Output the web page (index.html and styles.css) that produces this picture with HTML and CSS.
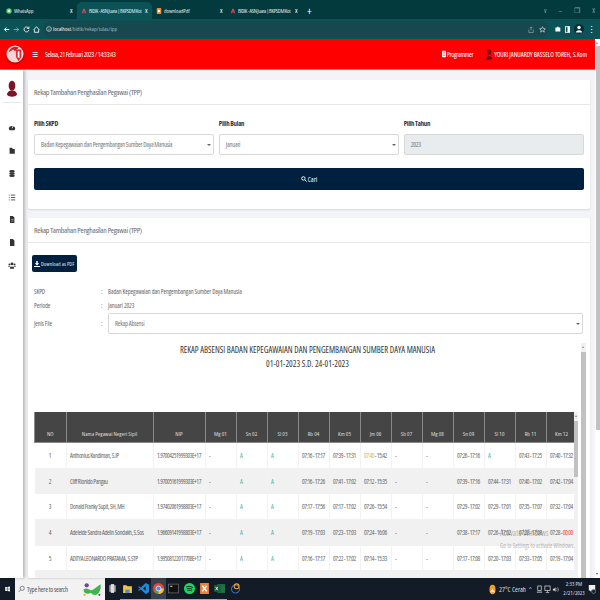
FILE: index.html
```html
<!DOCTYPE html>
<html lang="id">
<head>
    <meta charset="UTF-8">
    <title>BIDIK - ASN Juara</title>
    <link rel="stylesheet" href="styles.css">
</head>
<body>
<!-- browser tabs -->
<div class="tabs">
    <div class="tab tab-wa"><svg class="fav" viewBox="0 0 8 8"><circle cx="4" cy="4" r="3.6" fill="#4fce5d"/><circle cx="4" cy="4" r="1.8" fill="#fff"/></svg><span class="tab-name">WhatsApp</span><span class="tab-x">x</span></div>
    <div class="tab tab-active"><svg class="fav" viewBox="0 0 8 8"><path d="M1 7 3 1h2l2 6H5L4 4 3 7z" fill="#d9414e"/></svg><span class="tab-name">BIDIK - ASN Juara | BKPSDM Kot</span><span class="tab-x">x</span></div>
    <div class="tab tab-pdf"><svg class="fav" viewBox="0 0 8 8"><rect x="1" y="0" width="6" height="8" rx="1" fill="#f08a24"/><rect x="2.500" y="2.500" width="3" height="3" fill="#fff"/></svg><span class="tab-name">downloadPdf</span><span class="tab-x">x</span></div>
    <div class="tab tab-last"><svg class="fav" viewBox="0 0 8 8"><path d="M1 7 3 1h2l2 6H5L4 4 3 7z" fill="#d9414e"/></svg><span class="tab-name">BIDIK - ASN Juara | BKPSDM Kot</span><span class="tab-x">x</span></div>
    <span class="tab-plus">+</span>
    <div class="win-btns"><span>v</span><span>–</span><span>❐</span><span>X</span></div>
</div>

<!-- address bar -->
<div class="toolbar">
    <svg class="tool" viewBox="0 0 10 10"><path d="M9 5H2M5 2 2 5l3 3" fill="none" stroke="#fff" stroke-width="1.300"/></svg>
    <svg class="tool dim" viewBox="0 0 10 10"><path d="M1 5h7M5 2l3 3-3 3" fill="none" stroke="#fff" stroke-width="1.300"/></svg>
    <svg class="tool" viewBox="0 0 10 10"><path d="M8 3a3.500 3.500 0 1 0 .5 2.500M8.500 1v2.500H6" fill="none" stroke="#fff" stroke-width="1.200"/></svg>
    <svg class="tool" viewBox="0 0 10 10"><path d="M2 5v4h6V5M1 5.500 5 1l4 4.500" fill="none" stroke="#fff" stroke-width="1.200"/></svg>
    <div class="address">
        <svg class="addr-info" viewBox="0 0 8 8"><circle cx="4" cy="4" r="3.200" fill="none" stroke="#dfe" stroke-width=".8"/><path d="M4 3.500V6" stroke="#dfe" stroke-width=".8"/></svg>
        <span class="addr-host">localhost</span><span class="addr-path">/bidik/rekap/tulas/tpp</span>
        <svg class="addr-end" viewBox="0 0 8 8"><path d="M1 4v3.500h5V4M3.500 5V1M2 2.500 3.500 1 5 2.500" fill="none" stroke="#8fa9ab" stroke-width=".8"/></svg>
        <svg class="addr-end" viewBox="0 0 8 8"><path d="m4 .8 1 2.200 2.300.2-1.800 1.500.6 2.300L4 5.800 1.900 7l.6-2.300L.7 3.200 3 3z" fill="none" stroke="#cfdcdc" stroke-width=".8"/></svg>
    </div>
    <svg class="tool" viewBox="0 0 10 10"><path d="M2 2h2.500V1h2v1H9v6H2z" fill="#fff"/></svg>
    <svg class="tool" viewBox="0 0 10 10"><rect x="2" y="1" width="6" height="8" fill="none" stroke="#fff" stroke-width="1.200"/><rect x="5" y="1" width="3" height="8" fill="#fff"/></svg>
    <svg class="tool avatar-btn" viewBox="0 0 10 10"><circle cx="5" cy="5" r="5" fill="#052f33"/><circle cx="5" cy="3.500" r="1.700" fill="#fff"/><path d="M2 8.500c0-3 6-3 6 0z" fill="#fff"/></svg>
    <span class="tool-dots">⋮</span>
</div>

<div class="window">
    <div class="app">
        <header class="topbar">
            <svg class="logo" viewBox="0 0 20 20"><circle cx="10" cy="10" r="9.500" fill="#f6d4d4"/><path d="M3 8c2-6 8-7 11-5l-4 4-2-2z" fill="#c8222c"/><path d="M11 5h6v8l-3 5-3-5z" fill="#d92a34"/><path d="M13 7h2v7h-2z" fill="#fff"/></svg>
            <span class="burger">☰</span>
            <span class="date">Selasa, 21 Februari 2023 / 14:33:43</span>
            <div class="role">
                <svg class="role-ico" viewBox="0 0 5 8"><rect width="5" height="8" rx=".5" fill="#fff"/><path d="M1 2h3M1 4h3M1 6h3" stroke="#f00" stroke-width=".6"/></svg>
                <span>Programmer</span>
            </div>
            <div class="user">
                <svg class="user-ico" viewBox="0 0 7 13"><ellipse cx="3.500" cy="3.500" rx="2.500" ry="3.500" fill="#7a0a14"/><path d="M0 12c0-5 7-5 7 0l-3.500 1z" fill="#7a0a14"/></svg>
                <span>YOURI JANUARDY BASSELO TOREH, S.Kom</span>
            </div>
        </header>

        <div class="main">
            <nav class="sidebar">
                <svg class="side-avatar" viewBox="0 0 12 20"><ellipse cx="6" cy="6" rx="4" ry="6" fill="#7d1326"/><path d="M0 17c0-7 12-7 12 0-2 3-10 3-12 0z" fill="#7d1326"/></svg>
                <hr class="side-line">
                <svg class="side-ico" viewBox="0 0 10 10"><path d="M1 7a4 4 0 1 1 8 0L8 8.500H2z" fill="#333"/><path d="M5 6 6.500 3" stroke="#fff"/></svg>
                <svg class="side-ico" viewBox="0 0 10 10"><path d="M2 1.500h3l1 1.500h2.500v6H2z" fill="#333"/></svg>
                <svg class="side-ico" viewBox="0 0 10 10"><ellipse cx="5" cy="2.200" rx="3.500" ry="1.700" fill="#333"/><ellipse cx="5" cy="5" rx="3.500" ry="1.700" fill="#333"/><ellipse cx="5" cy="7.800" rx="3.500" ry="1.700" fill="#333"/></svg>
                <svg class="side-ico side-list" viewBox="0 0 10 10"><path d="M1 2h1M1 5h1M1 8h1M3.500 2H9M3.500 5H9M3.500 8H9" stroke="#333" stroke-width="1"/></svg>
                <svg class="side-ico" viewBox="0 0 10 10"><path d="M2.500 .5h3.500L8 2.500v7H2.500z" fill="#333"/><path d="M4 5h3M4 7h3" stroke="#ddd" stroke-width=".7"/></svg>
                <svg class="side-ico" viewBox="0 0 10 10"><path d="M2.500 .5h3.500L8 2.500v7H2.500z" fill="#333"/></svg>
                <svg class="side-ico" viewBox="0 0 10 10"><circle cx="5" cy="3" r="1.800" fill="#333"/><circle cx="1.800" cy="3.800" r="1.200" fill="#333"/><circle cx="8.200" cy="3.800" r="1.200" fill="#333"/><path d="M2.500 9V6.500h5V9zM.5 7V5.500h1.500V7zM8 5.500h1.500V7H8z" fill="#333"/></svg>
            </nav>

            <main class="content">
                <section class="card card-form">
                    <h2 class="card-title">Rekap Tambahan Penghasilan Pegawai (TPP)</h2>
                    <div class="card-body">
                        <div class="form-grid">
                            <div class="field">
                                <label class="field-label">Pilih SKPD</label>
                                <div class="select">Badan Kepegawaian dan Pengembangan Sumber Daya Manusia<i class="caret"></i></div>
                            </div>
                            <div class="field">
                                <label class="field-label">Pilih Bulan</label>
                                <div class="select">Januari<i class="caret"></i></div>
                            </div>
                            <div class="field">
                                <label class="field-label">Pilih Tahun</label>
                                <div class="select select-off">2023</div>
                            </div>
                        </div>
                        <button class="btn-search">
                            <svg class="btn-ico" viewBox="0 0 8 8"><circle cx="3.200" cy="3.200" r="2.300" fill="none" stroke="#fff" stroke-width="1.200"/><path d="m5 5 2.500 2.500" stroke="#fff" stroke-width="1.300"/></svg>Cari
                        </button>
                    </div>
                </section>

                <section class="card card-report">
                    <h2 class="card-title">Rekap Tambahan Penghasilan Pegawai (TPP)</h2>
                    <div class="card-body">
                        <button class="btn-pdf">
                            <svg class="btn-ico" viewBox="0 0 8 8"><path d="M3 0h2v3h2L4 6 1 3h2zM0 6.500h8V8H0z" fill="#fff"/></svg>Download as PDF
                        </button>
                        <div class="info info-text"><span class="info-key">SKPD</span><span class="info-colon">:</span><span>Badan Kepegawaian dan Pengembangan Sumber Daya Manusia</span></div>
                        <div class="info info-text"><span class="info-key">Periode</span><span class="info-colon">:</span><span>Januari 2023</span></div>
                        <div class="info info-file"><span class="info-key">Jenis File</span><span class="info-colon">:</span><div class="select select-wide">Rekap Absensi<i class="caret"></i></div></div>

                        <div class="report">
                            <div class="report-body">
                                <h3 class="report-title">REKAP ABSENSI BADAN KEPEGAWAIAN DAN PENGEMBANGAN SUMBER DAYA MANUSIA<br>01-01-2023 S.D. 24-01-2023</h3>
                                <div class="table-box">
                                    <div class="table-clip">
                                        <table class="rekap">
                                            <colgroup>
                                                <col class="c-no"><col class="c-nama"><col class="c-nip">
                                                <col class="c-day"><col class="c-day"><col class="c-day"><col class="c-day"><col class="c-day"><col class="c-day">
                                                <col class="c-day"><col class="c-day"><col class="c-day"><col class="c-day"><col class="c-day"><col class="c-day">
                                            </colgroup>
                                            <thead>
                                                <tr><th>NO</th><th>Nama Pegawai Negeri Sipil</th><th>NIP</th><th>Mg 01</th><th>Sn 02</th><th>Sl 03</th><th>Rb 04</th><th>Km 05</th><th>Jm 06</th><th>Sb 07</th><th>Mg 08</th><th>Sn 09</th><th>Sl 10</th><th>Rb 11</th><th>Km 12</th></tr>
                                            </thead>
                                            <tbody>
                                                <tr class="r1"><td class="no">1</td><td class="nama">Anthonius Kandiman, S.IP</td><td>1.97004251999303E+17</td><td>-</td><td class="abs">A</td><td class="abs">A</td><td>07:16 - 17:17</td><td>07:39 - 17:31</td><td><span class="late">07:40</span> - 15:42</td><td>-</td><td>-</td><td>07:26 - 17:16</td><td class="abs">A</td><td>07:43 - 17:25</td><td>07:40 - 17:32</td></tr>
                                                <tr class="r2"><td class="no">2</td><td class="nama">Cliff Rionldo Pangau</td><td>1.97005161999303E+17</td><td>-</td><td class="abs">A</td><td class="abs">A</td><td>07:16 - 17:26</td><td>07:41 - 17:02</td><td>07:12 - 15:35</td><td>-</td><td>-</td><td>07:39 - 17:16</td><td>07:44 - 17:31</td><td>07:40 - 17:02</td><td>07:42 - 17:04</td></tr>
                                                <tr class="r3"><td class="no">3</td><td class="nama">Donald Franky Supit, SH, MH</td><td>1.97402061998803E+17</td><td>-</td><td class="abs">A</td><td class="abs">A</td><td>07:17 - 17:56</td><td>07:17 - 17:02</td><td>07:26 - 15:54</td><td>-</td><td>-</td><td>07:29 - 17:02</td><td>07:29 - 17:01</td><td>07:35 - 17:07</td><td>07:32 - 17:04</td></tr>
                                                <tr class="r4"><td class="no">4</td><td class="nama">Adeleide Sandra Adelin Sondakh, S.Sos</td><td>1.96609141998803E+17</td><td>-</td><td class="abs">A</td><td class="abs">A</td><td>07:19 - 17:03</td><td>07:23 - 17:03</td><td>07:24 - 16:06</td><td>-</td><td>-</td><td>07:38 - 17:17</td><td>07:26 - 17:02</td><td>07:28 - 17:08</td><td>07:28 - <span class="miss">00:00</span></td></tr>
                                                <tr class="r5"><td class="no">5</td><td class="nama">ADITYA LEONARDO PRATAMA, S.STP</td><td>1.99508122017708E+17</td><td>-</td><td class="abs">A</td><td class="abs">A</td><td>07:16 - 17:17</td><td>07:22 - 17:02</td><td>07:14 - 15:33</td><td>-</td><td>-</td><td>07:17 - 17:08</td><td>07:20 - 17:03</td><td>07:33 - 17:05</td><td>07:19 - 17:04</td></tr>
                                                <tr class="r6"><td colspan="15"></td></tr>
                                            </tbody>
                                        </table>
                                    </div>
                                    <div class="bar bar-table"><i class="bar-thumb"></i></div>
                                </div>
                            </div>
                            <div class="bar bar-report"><i class="bar-thumb"></i></div>
                        </div>
                    </div>
                </section>
            </main>
        </div>
    </div>
    <div class="bar bar-page"><i class="bar-thumb"></i></div>

    <div class="activate">
        <div class="activate-big">Activate Windows</div>
        <div>Go to Settings to activate Windows.</div>
    </div>
</div>

<!-- windows taskbar -->
<footer class="taskbar">
    <svg class="start" viewBox="0 0 10 10"><path d="M0 1.500 4.500 1v3.700H0zM5.300.9 10 0v4.700H5.300zM0 5.300h4.500V9L0 8.500zM5.300 5.300H10V10l-4.700-.9z" fill="#fff"/></svg>
    <div class="search">
        <svg class="search-ico" viewBox="0 0 8 8"><circle cx="4.800" cy="3.200" r="2.400" fill="none" stroke="#555" stroke-width=".8"/><path d="M3 5 .8 7.400" stroke="#555" stroke-width=".8"/></svg>
        <span>Type here to search</span>
        <svg class="mask" viewBox="0 0 20 16"><path d="M2 8c3-2 5 0 7 1 3-1 6-4 9-6 1 5-2 11-6 10-2 0-3-2-3-2-3 2-7 1-7-3z" fill="#3fb54a"/><circle cx="5" cy="4" r="2" fill="#7b3fa0"/><circle cx="3" cy="13" r="1" fill="#e6b422"/><circle cx="17" cy="13" r="1" fill="#7b3fa0"/></svg>
    </div>
    <div class="apps">
        <span class="app-item"><svg viewBox="0 0 10 10"><rect x="2" y="2" width="6" height="6" fill="#999"/><rect x="3.500" y="1" width="3" height="8" fill="#ddd"/></svg></span>
        <span class="app-item on"><svg viewBox="0 0 10 10"><path d="M1 2h3l1 1h4v6H1z" fill="#f4c542"/><rect x="3" y="6" width="4" height="3" fill="#4a90d9"/></svg></span>
        <span class="app-item on"><svg viewBox="0 0 10 10"><path d="M7 0 10 1.500v7L7 10 2.500 6 1 7 0 6.300 1.800 5 0 3.700 1 3l1.500 1zM7 3 4.500 5 7 7z" fill="#1f8ad2"/></svg></span>
        <span class="app-item on active"><svg viewBox="0 0 10 10"><circle cx="5" cy="5" r="5" fill="#e0483a"/><path d="M5 5 .7 7.500A5 5 0 0 0 5 10z" fill="#3aa757"/><path d="M5 5h5a5 5 0 0 1-5 5z" fill="#f7c331"/><circle cx="5" cy="5" r="2.200" fill="#4a8af4" stroke="#fff" stroke-width=".6"/></svg></span>
        <span class="app-item on"><svg viewBox="0 0 10 10"><rect x=".5" y="1" width="9" height="8" fill="#111" stroke="#777" stroke-width=".6"/><path d="M2 3h2" stroke="#ccc"/></svg></span>
        <span class="app-item on"><svg viewBox="0 0 10 10"><circle cx="5" cy="5" r="5" fill="#1ed760"/><path d="M2 3.500c2-.6 4-.5 6 .5M2.500 5.200c1.800-.4 3.400-.3 5 .5M3 6.800c1.400-.3 2.700-.2 4 .4" stroke="#111" stroke-width=".8" fill="none"/></svg></span>
        <span class="app-item on"><svg viewBox="0 0 10 10"><rect x="1" y="0" width="8" height="10" fill="#f0803c"/><path d="m3 2.500 4 5M7 2.500l-4 5" stroke="#fff" stroke-width="1.200"/></svg></span>
        <span class="app-item on"><svg viewBox="0 0 10 10"><rect x="3" y="1" width="7" height="8" fill="#1e7145"/><rect x="0" y="2" width="6" height="6" fill="#155c36"/><path d="m1.500 3.500 2 3M3.500 3.500l-2 3" stroke="#fff" stroke-width=".7"/></svg></span>
        <span class="app-item"><svg viewBox="0 0 10 10"><circle cx="5" cy="5.500" r="3.600" fill="none" stroke="#3f6fc4" stroke-width="1"/><circle cx="6" cy="3" r="2.200" fill="none" stroke="#e8a33d" stroke-width="1"/></svg></span>
    </div>
    <div class="tray">
        <svg class="weather" viewBox="0 0 8 12"><ellipse cx="4" cy="6" rx="3.500" ry="5.500" fill="#f29a2e"/><path d="M1.500 9c0-2 1.500-2 2.500-3.500C5 7 6.500 7 6.500 9z" fill="#cfe3f5"/></svg>
        <span class="weather-text">27°C Cerah</span>
        <span class="tray-sym">^</span>
        <svg class="tray-ico" viewBox="0 0 8 10"><rect x="2" y="1" width="4" height="5" fill="none" stroke="#ddd" stroke-width=".8"/><path d="M1 8h6" stroke="#ddd"/></svg>
        <svg class="tray-ico" viewBox="0 0 8 10"><rect x="1" y="1" width="6" height="5" fill="none" stroke="#ddd" stroke-width=".8"/><path d="M4 6v2M2 8.500h4" stroke="#ddd" stroke-width=".8"/></svg>
        <svg class="tray-ico" viewBox="0 0 8 10"><path d="M1 4h1.500L4 2.500v5L2.500 6H1z" fill="#ddd"/><path d="M5 3.500c1 1 1 2 0 3M6.300 2.500c1.400 1.600 1.400 3.400 0 5" fill="none" stroke="#ddd" stroke-width=".6"/></svg>
        <div class="clock"><span>2:33 PM</span><span>2/21/2023</span></div>
        <svg class="notif" viewBox="0 0 10 12"><path d="M1 1h8v7H4L2.500 9.500V8H1z" fill="#eee"/><circle cx="7" cy="9" r="2.600" fill="#1b2430" stroke="#ccc" stroke-width=".5"/></svg>
    </div>
</footer>
</body>
</html>
```

FILE: styles.css
```css
* {
    box-sizing: border-box;
}

html, body {
    margin: 0;
    height: 100%;
}

body {
    width: 600px;
    height: 600px;
    overflow: hidden;
    display: flex;
    flex-direction: column;
    font-family: "Open Sans", "Liberation Sans", sans-serif;
    font-stretch: 75%;
    color: #666;
}

/* browser tabs */
.tabs {
    height: 19px;
    flex: none;
    display: flex;
    align-items: flex-end;
    padding-left: 5px;
    background: #033a3e;
    color: #dfe8e8;
    font-size: 5.800px;
}

.tab {
    height: 17px;
    display: flex;
    align-items: center;
    gap: 2px;
    white-space: nowrap;
}

.tab-wa {
    width: 72px;
    padding-left: 1px;
}

.tab-active {
    width: 75px;
    padding-left: 4px;
    background: #0c5358;
    border-radius: 5px 5px 0 0;
}

.tab-pdf {
    width: 75px;
    padding-left: 4px;
}

.tab-last {
    width: 75px;
    padding-left: 3px;
}

.fav {
    width: 6px;
    height: 8px;
    flex: none;
}

.tab-name {
    min-width: 0;
    flex: 1;
    letter-spacing: -.1px;
}

.tab-active .tab-name,
.tab-last .tab-name {
    letter-spacing: -.38px;
}

.tab-x {
    width: 7px;
    flex: none;
    font-size: 7px;
    color: #fff;
}

.tab-plus {
    height: 17px;
    margin-left: 5px;
    color: #fff;
    font-size: 11px;
    line-height: 17px;
}

.win-btns {
    margin-left: auto;
    height: 17px;
    width: 56px;
    display: flex;
    justify-content: space-between;
    align-items: center;
    padding-right: 5px;
    color: #8aa;
    font-size: 7px;
}

/* address bar */
.toolbar {
    height: 20px;
    flex: none;
    display: flex;
    align-items: center;
    gap: 3px;
    padding: 0 4px 0 3px;
    background: #0c5358;
}

.tool {
    width: 7px;
    height: 7px;
    flex: none;
    overflow: visible;
}

.dim {
    opacity: .5;
}

.address {
    flex: 1;
    height: 16px;
    display: flex;
    align-items: center;
    margin-right: 3px;
    padding: 0 2px 0 3px;
    border-radius: 8px;
    background: #15484f;
    font-size: 5.800px;
    color: #9fb8ba;
}

.addr-info {
    width: 6px;
    height: 6px;
    margin-right: 1px;
}

.addr-host {
    color: #eef4f4;
}

.addr-end {
    width: 7px;
    height: 7px;
    margin-left: 4px;
}

.addr-path + .addr-end {
    margin-left: auto;
}

.avatar-btn {
    width: 10px;
    height: 10px;
}

.tool-dots {
    color: #fff;
    font-size: 9px;
    line-height: 9px;
}

/* page */
.window {
    position: relative;
    flex: 1;
    min-height: 0;
    display: flex;
}

.app {
    flex: 1;
    min-width: 0;
    display: flex;
    flex-direction: column;
}

.topbar {
    height: 31px;
    flex: none;
    display: flex;
    align-items: center;
    padding: 0 8px 0 6px;
    background: #fe0000;
    border-bottom: 1px solid #f66;
    color: #fff;
    font-size: 6.800px;
}

.logo {
    width: 18px;
    height: 20px;
    margin-right: 8px;
    filter: drop-shadow(0 1px 1px rgba(0, 0, 0, .4));
}

.burger {
    width: 13px;
    font-size: 7px;
}

.date {
    letter-spacing: -.35px;
}

.role {
    margin-left: auto;
    display: flex;
    align-items: center;
    gap: 1px;
    letter-spacing: -.3px;
}

.role-ico {
    width: 4px;
    height: 8px;
}

.user {
    margin-left: 13px;
    display: flex;
    align-items: center;
    gap: 2px;
    letter-spacing: -.1px;
}

.user-ico {
    width: 6px;
    height: 13px;
}

.main {
    flex: 1;
    min-height: 0;
    display: flex;
}

.sidebar {
    position: relative;
    width: 23px;
    flex: none;
    display: flex;
    flex-direction: column;
    align-items: center;
    padding-top: 10px;
    background: #fff;
    box-shadow: 2px 0 3px rgba(0, 0, 0, .25);
}

.side-avatar {
    width: 10px;
    height: 18px;
}

.side-line {
    width: 18px;
    margin: 4px 0 20px;
    border: 0;
    border-top: 1px solid #e6e6e6;
}

.side-ico {
    width: 8px;
    height: 9px;
    margin-bottom: 14px;
}

.side-list {
    margin-top: 1px;
    margin-bottom: 13px;
}

.content {
    flex: 1;
    min-width: 0;
    display: flex;
    flex-direction: column;
    gap: 9px;
    padding: 10px 5px 0;
    background: #f3f4f8;
}

.card {
    background: #fff;
    border-radius: 2px;
    box-shadow: 0 1px 2px rgba(0, 0, 0, .12);
}

.card-form {
    height: 129px;
    flex: none;
}

.card-report {
    flex: 1;
    min-height: 0;
    overflow: hidden;
}

.card-title {
    height: 25px;
    margin: 0;
    padding: 0 6px;
    border-bottom: 1px solid #e8e8e8;
    font-size: 7.800px;
    font-weight: 400;
    letter-spacing: -.3px;
    line-height: 24px;
    color: #6b6b6b;
}

.card-body {
    padding: 0 6px;
}

.form-grid {
    display: grid;
    grid-template-columns: repeat(3, 1fr);
    gap: 4.500px;
    padding-top: 14px;
}

.field-label {
    display: block;
    height: 15px;
    font-size: 6.800px;
    font-weight: 700;
    letter-spacing: -.25px;
    line-height: 10px;
    color: #333;
}

.select {
    position: relative;
    height: 21px;
    padding-left: 6px;
    border: 1px solid #d8d8d8;
    border-radius: 2px;
    background: #fff;
    font-size: 6.600px;
    letter-spacing: -.25px;
    line-height: 19px;
    color: #777;
}

.select-off {
    background: #e9ecef;
}

.caret {
    position: absolute;
    top: 9px;
    right: 2px;
    border: 2px solid transparent;
    border-top: 2px solid #666;
    border-bottom: 0;
}

.btn-search {
    display: flex;
    align-items: center;
    justify-content: center;
    gap: 1px;
    width: 100%;
    height: 22px;
    margin-top: 13px;
    padding: 0;
    border: 0;
    border-radius: 2px;
    background: #00203f;
    color: #fff;
    font-family: inherit;
    font-stretch: inherit;
    font-size: 7px;
}

.btn-ico {
    width: 6px;
    height: 6px;
}

.btn-pdf {
    display: flex;
    align-items: center;
    gap: 1px;
    width: 45px;
    height: 17px;
    margin: 12px 0 12px -2px;
    padding: 0 0 0 2px;
    border: 0;
    border-radius: 2px;
    background: #00203f;
    color: #dfe6ee;
    font-family: inherit;
    font-stretch: inherit;
    font-size: 5.600px;
    white-space: nowrap;
}

.info {
    display: flex;
    align-items: center;
    font-size: 6.400px;
    letter-spacing: -.12px;
    color: #666;
}

.info-text {
    height: 14px;
}

.info-file {
    height: 22px;
}

.info-key {
    width: 67px;
}

.info-colon {
    width: 7px;
}

.select-wide {
    width: 475px;
    padding-left: 6px;
}

.report {
    display: flex;
    width: 552px;
    height: 236px;
    margin-top: 9px;
}

.report-body {
    flex: 1;
    min-width: 0;
}

.report-title {
    height: 69px;
    margin: 0;
    font-size: 8.600px;
    font-weight: 400;
    line-height: 14px;
    text-align: center;
    color: #333;
}

.table-box {
    display: flex;
    width: 544px;
}

.table-clip {
    width: 539.500px;
    height: 170px;
    overflow: hidden;
}

.rekap {
    width: 542.500px;
    table-layout: fixed;
    border-collapse: collapse;
    font-size: 6.400px;
    color: #666;
}

.c-no {
    width: 31.500px;
}

.c-nama {
    width: 87px;
}

.c-nip {
    width: 52px;
}

.c-day {
    width: 31px;
}

.rekap th {
    height: 30px;
    padding: 14px 0 0;
    border: 1px solid #8a8a8a;
    border-top: 0;
    background: #454545;
    color: #ddd;
    font-size: 6px;
    font-weight: 400;
    text-align: center;
}

.rekap td {
    padding: 0 0 0 3.500px;
    border-right: 1px solid #f2f2f2;
    letter-spacing: -.45px;
    white-space: nowrap;
    overflow: hidden;
}

.rekap .nama {
    letter-spacing: -.33px;
}

.rekap .no {
    padding: 0;
    text-align: center;
}

.abs {
    color: #45b8ac;
}

.late {
    color: #d8b93a;
}

.miss {
    color: #f04040;
}

.r1 {
    height: 26px;
}

.r2 {
    height: 26px;
    background: #f1f1f1;
}

.r3 {
    height: 25px;
}

.r4 {
    height: 27px;
    background: #f1f1f1;
}

.r5 {
    height: 24px;
}

.r6 {
    height: 20px;
    background: #f1f1f1;
}

/* scrollbars */
.bar {
    position: relative;
    flex: none;
    background: #f1f1f1;
}

.bar::before {
    content: "";
    position: absolute;
    top: 3px;
    left: 50%;
    margin-left: -1.500px;
    border: 1.500px solid transparent;
    border-bottom: 2px solid #888;
    border-top: 0;
}

.bar-thumb {
    display: block;
    background: #c1c1c1;
}

.bar-table {
    width: 4px;
    height: 170px;
    margin-left: .5px;
}

.bar-table .bar-thumb {
    height: 56px;
    margin-top: 9px;
}

.bar-report {
    width: 5px;
}

.bar-report .bar-thumb {
    height: 226px;
    margin-top: 9px;
}

.bar-page {
    width: 5px;
    background: #fff;
}

.bar-page .bar-thumb {
    width: 4px;
    height: 384px;
    margin: 7px 0 0 .5px;
}

.bar-page::after {
    content: "";
    position: absolute;
    bottom: 3px;
    left: 50%;
    margin-left: -1.500px;
    border: 1.500px solid transparent;
    border-top: 2px solid #555;
    border-bottom: 0;
}

.activate {
    position: absolute;
    left: 500px;
    top: 487px;
    font-size: 6.200px;
    line-height: 13px;
    color: rgba(110, 110, 110, .55);
    white-space: nowrap;
}

.activate-big {
    font-size: 8px;
}

/* taskbar */
.taskbar {
    height: 22px;
    flex: none;
    display: flex;
    align-items: center;
    background: #131c26;
    color: #dde;
    font-size: 6.500px;
}

.start {
    width: 5px;
    height: 6px;
    margin: 0 5px;
    flex: none;
}

.search {
    width: 90px;
    height: 22px;
    display: flex;
    align-items: center;
    padding-left: 3px;
    background: #f2f2f2;
    color: #555;
    font-size: 6.800px;
    letter-spacing: -.25px;
}

.search-ico {
    width: 7px;
    height: 8px;
    margin-right: 2px;
}

.mask {
    width: 22px;
    height: 17px;
    margin-left: auto;
    margin-right: 2px;
}

.apps {
    display: flex;
}

.app-item {
    width: 15.300px;
    height: 22px;
    display: flex;
    align-items: center;
    justify-content: center;
    border-bottom: 1px solid transparent;
}

.app-item svg {
    width: 11px;
    height: 11px;
}

.app-item.on {
    border-bottom-color: #7fb4dc;
}

.app-item.active {
    background: #3a414a;
}

.tray {
    margin-left: auto;
    display: flex;
    align-items: center;
    padding-right: 4px;
}

.weather {
    width: 7px;
    height: 11px;
    margin-right: 3px;
}

.weather-text {
    width: 30px;
    font-size: 7px;
}

.tray-sym {
    width: 7px;
    font-size: 6px;
}

.tray-ico {
    width: 7px;
    height: 9px;
    margin-right: 1px;
}

.clock {
    width: 24px;
    margin-left: 2px;
    display: flex;
    flex-direction: column;
    align-items: center;
    font-size: 5.800px;
    line-height: 9.500px;
}

.notif {
    width: 8px;
    height: 10px;
    margin-left: 2px;
}
```
